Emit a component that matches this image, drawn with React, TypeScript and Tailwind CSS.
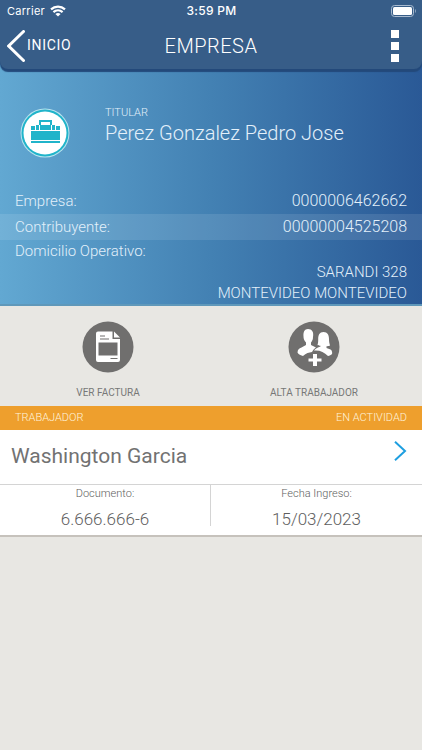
import React from "react";

function StatusBar() {
  return (
    <div className="grid h-[22px] grid-cols-3 items-center pl-[7px] pr-[6px] font-['Inter','Liberation_Sans',sans-serif] text-[11px] leading-[22px]">
      <div className="flex items-center gap-[5px]">
        <span className="tracking-wide">Carrier</span>
        <svg width="16" height="12" viewBox="0 0 16 12" fill="none" stroke="white" strokeWidth="2.200" aria-hidden="true">
          <path d="M1 4.400C5 .6 11 .6 15 4.400" />
          <path d="M3.400 7.100C6.100 4.700 9.900 4.700 12.600 7.100" />
          <path d="M5.400 9C7 7.600 9 7.600 10.600 9L8 11.600Z" fill="white" stroke="none" />
        </svg>
      </div>
      <span className="text-center text-[12px] font-medium tracking-wide whitespace-nowrap">3:59 PM</span>
      <svg className="justify-self-end" width="25" height="12" viewBox="0 0 25 12" aria-hidden="true">
        <rect x=".5" y=".5" width="22" height="11" rx="3" fill="none" stroke="#a9bbd0" />
        <rect x="2" y="2" width="19" height="8" rx="1.500" fill="white" />
        <path d="M24 4v4c1-.6 1-3.400 0-4Z" fill="#a9bbd0" />
      </svg>
    </div>
  );
}

function Header() {
  return (
    <header className="relative rounded-b-[8px] bg-[#375d88] text-white shadow-[0_3px_1px_#23497a]">
      <StatusBar />
      <div className="grid h-[47px] grid-cols-3 items-center pl-[7px] pr-[23px]">
        <button type="button" className="flex items-center gap-[2px] justify-self-start text-[14px] tracking-wider">
          <svg width="18" height="32" viewBox="0 0 18 32" fill="none" stroke="white" strokeWidth="3" strokeLinecap="round" aria-hidden="true">
            <path d="M16.500 1.500L1.700 16L16.500 30.500" />
          </svg>
          INICIO
        </button>
        <h1 className="pl-[16px] text-center text-[20px] font-light tracking-wide">EMPRESA</h1>
        <button type="button" aria-label="Menú" className="justify-self-end">
          <svg width="8" height="32" viewBox="0 0 8 32" fill="white" aria-hidden="true">
            <path d="M0 0h8v8H0zM0 12h8v8H0zM0 24h8v8H0z" />
          </svg>
        </button>
      </div>
    </header>
  );
}

function BriefcaseBadge() {
  return (
    <svg width="50" height="50" viewBox="0 0 50 50" className="shrink-0" aria-hidden="true">
      <circle cx="25" cy="25" r="24.500" fill="#b9e3ee" />
      <circle cx="25" cy="25" r="23.500" fill="#20b4ca" />
      <circle cx="25" cy="25" r="21.500" fill="white" />
      <g fill="#20b4ca">
        <path d="M19 17v-5h13v5h-2v-3h-9v3z" />
        <path d="M11 18h4v4h-4zM16 17h3v5h-3zM20 17h11v5H20zM32 17h3v5h-3zM36 18h4v4h-4z" />
        <path d="M11 23h29v9H11zM11 33h29v2H11z" />
      </g>
    </svg>
  );
}

function CompanyCard() {
  return (
    <section className="-mt-2 border-b-2 border-[#5f98ba] bg-linear-to-r from-[#62a8d2] via-[#4381b3] to-[#2a5996] pt-[44px] font-light text-[#e3f0fa]">
      <div className="flex items-start gap-[35px] pl-5">
        <div className="pt-[3px]">
          <BriefcaseBadge />
        </div>
        <div>
          <div className="text-[11px] leading-[16px]">TITULAR</div>
          <h2 className="text-[20px] leading-[24px]">Perez Gonzalez Pedro Jose</h2>
        </div>
      </div>
      <dl className="mt-[30px] text-[15px]">
        <div className="flex h-[26px] items-center justify-between px-[15px]">
          <dt>Empresa:</dt>
          <dd className="text-[16px]">0000006462662</dd>
        </div>
        <div className="flex h-[26px] items-center justify-between bg-white/10 px-[15px]">
          <dt>Contribuyente:</dt>
          <dd className="text-[16px]">00000004525208</dd>
        </div>
        <div className="px-[15px] pt-[1px] leading-[21px]">
          <dt>Domicilio Operativo:</dt>
          <dd className="text-right">
            SARANDI 328
            <br />
            MONTEVIDEO MONTEVIDEO
          </dd>
        </div>
      </dl>
    </section>
  );
}

function InvoiceIcon() {
  return (
    <svg width="52" height="52" viewBox="0 0 52 52" aria-hidden="true">
      <circle cx="26" cy="26" r="25.500" fill="#706f6e" />
      <path d="M16 10.500h14.500V18H38v21a2 2 0 0 1-2 2H16a2 2 0 0 1-2-2V12.500a2 2 0 0 1 2-2z" fill="white" />
      <path d="M32 10.500V16.500H38z" fill="white" />
      <path d="M16.500 21.500h19v13h-19zM18 14.500h5v1h-5zM18 17.500h9v1h-9zM28.500 37h7v1h-7z" fill="#706f6e" />
    </svg>
  );
}

function AddWorkerIcon() {
  return (
    <svg width="52" height="52" viewBox="0 0 52 52" aria-hidden="true">
      <circle cx="26" cy="26" r="25.500" fill="#706f6e" />
      <g fill="white">
        <path d="M20 8c4 0 6 3 5 8 0 3-1 4-2 5.500V24l5 2.500c-2 1-3 3-4 4.500-3 .5-6 1-9 4-3-1-5-2-5.500-3.500.2-3 1.500-4 4-5L18 24v-2.500c-2-2-2.500-4-2.500-6C15 11 16.500 8 20 8z" />
        <path d="M35.500 11c4 0 5.500 3 5.500 7 0 3 .5 4.500 1 6.500-1.500.7-2.500.7-3.500.7v1.800l4 1.500c1.500.7 2 3.500 1.500 4.500-1 1.200-2.500 1.700-4 2-4-4-8-6-14-5.500 1-1.500 2.500-2.500 6.500-4v-.8c-1 0-2 0-3-.7.7-2 .7-4 .7-6 0-4 1.300-7 5.300-7z" />
        <path d="M25 33h4v4.500h4.500v3H29V45h-4v-4.500h-4.500v-3H25z" />
      </g>
    </svg>
  );
}

function Actions() {
  return (
    <nav className="grid grid-cols-2 px-[5px] pt-[15px] pb-1 text-[10px] text-[#777]">
      <button type="button" className="flex flex-col items-center gap-[11px]">
        <InvoiceIcon />
        <span className="leading-[18px]">VER FACTURA</span>
      </button>
      <button type="button" className="flex flex-col items-center gap-[11px]">
        <AddWorkerIcon />
        <span className="leading-[18px]">ALTA TRABAJADOR</span>
      </button>
    </nav>
  );
}

function WorkerCard() {
  return (
    <section className="border-b-2 border-[#c6c2bc] bg-white">
      <div className="flex h-6 items-center justify-between bg-[#ee9f2d] px-[15px] text-[11px] font-light text-[#fff3dc]">
        <span>TRABAJADOR</span>
        <span>EN ACTIVIDAD</span>
      </div>
      <a href="#worker" className="flex h-[54px] items-center justify-between pr-[15px] pl-[11px] text-[21px] text-[#727272]">
        Washington Garcia
        <svg width="13" height="20" viewBox="0 0 13 20" className="mb-3" fill="none" stroke="#1e9fe0" strokeWidth="2" aria-hidden="true">
          <path d="M1 .8L11 10L1 19.200" />
        </svg>
      </a>
      <dl className="grid grid-cols-2 border-t border-[#d4d4d4] pb-[9px] text-center font-light text-[#5e5e5e]">
        <div className="h-[41px] border-r border-[#d4d4d4]">
          <dt className="text-[11px] leading-[18px]">Documento:</dt>
          <dd className="pt-1 text-[17px] leading-6">6.666.666-6</dd>
        </div>
        <div className="h-[41px]">
          <dt className="text-[11px] leading-[18px]">Fecha Ingreso:</dt>
          <dd className="pt-1 text-[17px] leading-6">15/03/2023</dd>
        </div>
      </dl>
    </section>
  );
}

export default function App() {
  return (
    <div className="min-h-screen bg-[#e8e7e3] font-['Roboto',sans-serif]">
      <Header />
      <main>
        <CompanyCard />
        <Actions />
        <WorkerCard />
      </main>
    </div>
  );
}
